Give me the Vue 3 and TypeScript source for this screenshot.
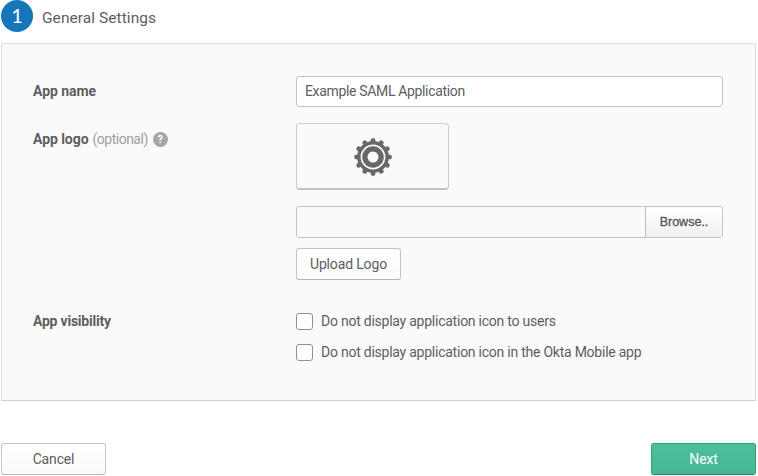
<script setup lang="ts">
import { ref } from 'vue'

interface VisibilityOption {
  id: string
  label: string
  checked: boolean
}

const appName = ref<string>('Example SAML Application')
const logoFile = ref<string>('')
const options = ref<VisibilityOption[]>([
  { id: 'users', label: 'Do not display application icon to users', checked: false },
  { id: 'mobile', label: 'Do not display application icon in the Okta Mobile app', checked: false },
])
const teeth: number[] = Array.from({ length: 12 }, (_, i) => i * 30)
</script>

<template>
  <main class="page">
    <header class="heading">
      <span class="step">1</span>
      <h1 class="title">General Settings</h1>
    </header>

    <section class="panel">
      <div class="row row-name">
        <label class="label" for="app-name">App name</label>
        <input id="app-name" v-model="appName" class="input" type="text" />
      </div>

      <div class="row row-logo">
        <div class="label">
          <span>App logo</span>
          <span class="optional">(optional)</span>
          <span class="help">?</span>
        </div>
        <div class="logo-field">
          <div class="preview">
            <svg class="gear" width="38" height="38" viewBox="-19 -19 38 38">
              <g fill="#686868">
                <rect
                  v-for="a in teeth"
                  :key="a"
                  x="-2.3"
                  y="-18.7"
                  width="4.6"
                  height="6"
                  rx="1.6"
                  :transform="`rotate(${a})`"
                />
                <circle r="15.9" />
              </g>
              <circle r="11.6" fill="none" stroke="#fafafa" stroke-width="1.7" />
              <circle r="5.5" fill="#fafafa" />
            </svg>
          </div>
          <div class="file">
            <input v-model="logoFile" class="file-input" type="text" aria-label="Logo file" />
            <button class="browse" type="button">Browse..</button>
          </div>
          <button class="button upload" type="button">Upload Logo</button>
        </div>
      </div>

      <div class="row row-visibility">
        <div class="label visibility">App visibility</div>
        <div class="options">
          <label v-for="o in options" :key="o.id" class="option">
            <input v-model="o.checked" class="check" type="checkbox" />
            <span>{{ o.label }}</span>
          </label>
        </div>
      </div>
    </section>

    <footer class="actions">
      <button class="button cancel" type="button">Cancel</button>
      <button class="button next" type="button">Next</button>
    </footer>
  </main>
</template>

<style>
body {
  background: #fff;
  overflow: hidden;
}
</style>

<style scoped>
* {
  box-sizing: border-box;
}

.page {
  width: 758px;
  height: 476px;
  padding: 0 2px 0 1px;
  color: #5e5e5e;
  font: 14px/18px Roboto, "Liberation Sans", sans-serif;
}

.heading {
  display: flex;
  align-items: center;
  gap: 9px;
  height: 32px;
}

.step {
  width: 32px;
  height: 32px;
  border-radius: 50%;
  background: #1577ba;
  color: #fff;
  font: 20px/31px Lato, sans-serif;
  text-align: center;
}

.title {
  margin: 3px 0 0;
  font-size: 15.5px;
  font-weight: 400;
  line-height: 20px;
  letter-spacing: 0.06px;
}

.panel {
  width: 755px;
  height: 358px;
  margin-top: 11px;
  padding: 32px 32px 0 31px;
  border: 1px solid #dedede;
  border-bottom-color: #d0d0d0;
  border-radius: 3px 3px 1px 1px;
  background: #fafafa;
}

.row {
  display: flex;
}

.label {
  display: flex;
  width: 263px;
  height: 18px;
  flex: none;
  align-items: center;
  font-weight: 700;
  letter-spacing: -0.05px;
  white-space: nowrap;
}

.visibility {
  letter-spacing: -0.22px;
}

.row-name .label {
  margin-top: 6px;
}

.optional {
  margin-left: 4px;
  color: #a0a0a0;
  font-weight: 400;
  letter-spacing: -0.5px;
}

.help {
  width: 15px;
  height: 15px;
  margin-left: 5px;
  border-radius: 50%;
  background: #a5a5a5;
  color: #fff;
  font-size: 11px;
  line-height: 15px;
  text-align: center;
}

.input {
  width: 427px;
  height: 31px;
  padding: 0 8px 1px;
  border: 1px solid #c4c4c4;
  border-radius: 3px;
  background: #fff;
  color: inherit;
  font: inherit;
  letter-spacing: -0.34px;
}

.row-logo {
  margin-top: 16px;
}

.row-logo .label {
  margin-top: 7px;
}

.logo-field {
  display: flex;
  flex-direction: column;
}

.preview {
  display: flex;
  width: 153px;
  height: 67px;
  align-items: center;
  justify-content: center;
  padding-top: 2px;
  border: 1px solid #cbcbcb;
  border-bottom: 2px solid #c3c3c3;
  border-radius: 4px;
  background: #fafafa;
}

.gear {
  display: block;
}

.file {
  display: flex;
  width: 427px;
  height: 32px;
  margin-top: 16px;
  border: 1px solid #c4c4c4;
  border-radius: 3px;
  overflow: hidden;
}

.file-input {
  min-width: 0;
  flex: 1;
  padding: 0 8px;
  border: 0;
  background: transparent;
}

.browse {
  width: 77px;
  padding: 0 0 1px;
  border: 0;
  border-left: 1px solid #bababa;
  background: linear-gradient(#fff, #f0f0f0);
  color: #555;
  font: 12.5px "Liberation Sans", Arial, sans-serif;
  -webkit-text-stroke: 0.3px #555;
}

.button {
  width: 105px;
  height: 32px;
  padding: 0;
  border: 1px solid #c4c4c4;
  border-bottom-color: #b5b5b5;
  border-radius: 3px;
  background: linear-gradient(#fff, #fafafa);
  color: #5e5e5e;
  font: inherit;
  letter-spacing: -0.15px;
}

.upload {
  margin-top: 10px;
}

.row-visibility {
  margin-top: 32px;
}

.options {
  display: flex;
  flex-direction: column;
  gap: 13px;
}

.option {
  display: flex;
  height: 18px;
  align-items: center;
  gap: 7px;
  letter-spacing: -0.24px;
  white-space: nowrap;
}

.check {
  width: 17px;
  height: 17px;
  margin: 0 1px 0 0;
  appearance: none;
  border: 1px solid #919191;
  border-radius: 3px;
  background: #fff;
}

.actions {
  display: flex;
  width: 755px;
  margin-top: 42px;
  justify-content: space-between;
}

.next {
  border-color: #319f7a;
  border-bottom-color: #288767;
  background: linear-gradient(#4cbf9c, #46b794);
  color: #fff;
}
</style>
